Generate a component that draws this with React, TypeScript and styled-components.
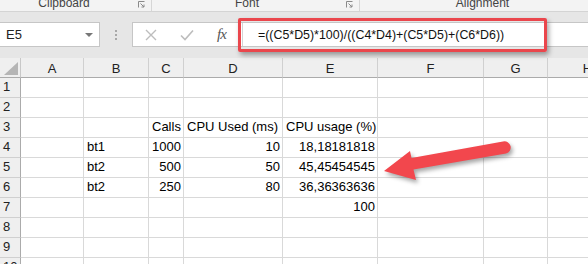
import React from 'react';
import styled, {createGlobalStyle} from 'styled-components';

type Align = 'left' | 'right';

type CellData = {
  value: string;
  align: Align;
};

const columns = [
  {key: 'A', width: 63},
  {key: 'B', width: 65},
  {key: 'C', width: 35},
  {key: 'D', width: 99},
  {key: 'E', width: 95},
  {key: 'F', width: 106},
  {key: 'G', width: 64},
  {key: 'H', width: 80},
];

const rows = [1, 2, 3, 4, 5, 6, 7, 8, 9, 10];

const cells: Record<string, CellData> = {
  C3: {value: 'Calls', align: 'left'},
  D3: {value: 'CPU Used (ms)', align: 'left'},
  E3: {value: 'CPU usage (%)', align: 'left'},
  B4: {value: 'bt1', align: 'left'},
  C4: {value: '1000', align: 'right'},
  D4: {value: '10', align: 'right'},
  E4: {value: '18,18181818', align: 'right'},
  B5: {value: 'bt2', align: 'left'},
  C5: {value: '500', align: 'right'},
  D5: {value: '50', align: 'right'},
  E5: {value: '45,45454545', align: 'right'},
  B6: {value: 'bt2', align: 'left'},
  C6: {value: '250', align: 'right'},
  D6: {value: '80', align: 'right'},
  E6: {value: '36,36363636', align: 'right'},
  E7: {value: '100', align: 'right'},
};

const groups = [
  {label: 'Clipboard', width: 152, shift: 10, launcher: true},
  {label: 'Font', width: 208, shift: 4, launcher: true},
  {label: 'Alignment', width: 250, shift: 4, launcher: false},
];

function Launcher() {
  return (
    <svg width="7" height="7" viewBox="0 0 7 7">
      <path d="M0.5 6.5V0.5H6.5" fill="none" stroke="#8a8a8a" />
      <path d="M2.5 2.5L6 6M6 3.5V6H3.5" fill="none" stroke="#8a8a8a" />
    </svg>
  );
}

function App() {
  return (
    <>
      <GlobalStyle />
      <Page>
        <Ribbon>
          {groups.map(group => (
            <Ribbon.Group key={group.label} $width={group.width}>
              <Ribbon.Label $shift={group.shift}>{group.label}</Ribbon.Label>
              {group.launcher && (
                <Ribbon.Launcher>
                  <Launcher />
                </Ribbon.Launcher>
              )}
            </Ribbon.Group>
          ))}
        </Ribbon>

        <Formula.Bar>
          <Formula.NameBox>
            E5
            <Formula.Caret />
          </Formula.NameBox>
          <Formula.Grip>
            <span />
            <span />
            <span />
          </Formula.Grip>
          <Formula.Field>
            <Formula.Buttons>
              <svg width="12" height="12" viewBox="0 0 12 12">
                <path d="M1 1L11 11M11 1L1 11" stroke="#bdbdbd" strokeWidth="1.4" />
              </svg>
              <svg width="14" height="12" viewBox="0 0 14 12">
                <path d="M1 6.5L5 10.5L13 1.5" fill="none" stroke="#bdbdbd" strokeWidth="1.6" />
              </svg>
              <Formula.Fx>fx</Formula.Fx>
            </Formula.Buttons>
            <Formula.Input>
              =((C5*D5)*100)/((C4*D4)+(C5*D5)+(C6*D6))
              <Formula.Highlight />
            </Formula.Input>
          </Formula.Field>
        </Formula.Bar>

        <Sheet.Grid $columns={columns.map(c => c.width)}>
          <Sheet.Corner>
            <Sheet.Triangle />
          </Sheet.Corner>
          {columns.map(col => (
            <Sheet.ColHead key={col.key}>{col.key}</Sheet.ColHead>
          ))}
          {rows.map(row => (
            <React.Fragment key={row}>
              <Sheet.RowHead>{row}</Sheet.RowHead>
              {columns.map(col => {
                const cell = cells[`${col.key}${row}`];
                return (
                  <Sheet.Cell key={col.key} $align={cell ? cell.align : 'left'}>
                    {cell && cell.value}
                  </Sheet.Cell>
                );
              })}
            </React.Fragment>
          ))}
        </Sheet.Grid>

        <Arrow viewBox="378 134 140 52" width="140" height="52">
          <path
            d="M384 171 L410 151 L411.5 158 L503 141.5 A6.2 6.2 0 0 1 506 153.6 L413.5 169.5 L416 180 Z"
            fill="#f2474d"
          />
        </Arrow>
      </Page>
    </>
  );
}

export default App;

const GlobalStyle = createGlobalStyle`
  html, body {
    margin: 0;
    padding: 0;
    background: #e6e6e6;
  }
  body {
    font-family: "Liberation Sans", Arial, sans-serif;
    overflow: hidden;
  }
`;

const Page = styled.div`
  position: relative;
  width: 588px;
  height: 264px;
  overflow: hidden;
  background: #e6e6e6;
`;

const RibbonBase = styled.div`
  display: flex;
  height: 11px;
  background: #f3f3f3;
  border-bottom: 1px solid #d4d4d4;
  overflow: hidden;
`;

const Ribbon = Object.assign(RibbonBase, {
  Group: styled.div<{$width: number}>`
    display: flex;
    flex: none;
    width: ${p => p.$width}px;
    box-sizing: border-box;
    border-right: 1px solid #d6d6d6;
  `,
  Label: styled.div<{$shift: number}>`
    flex: 1;
    padding-right: ${p => p.$shift}px;
    margin-top: -4px;
    text-align: center;
    font-size: 12px;
    line-height: 14px;
    color: #444;
  `,
  Launcher: styled.div`
    display: flex;
    margin: 1px 6px 0 0;
  `,
});

const Formula = {
  Bar: styled.div`
    display: flex;
    align-items: center;
    height: 46px;
    padding: 10px 0 11px;
    box-sizing: border-box;
  `,
  NameBox: styled.div`
    position: relative;
    display: flex;
    align-items: center;
    width: 100px;
    height: 25px;
    box-sizing: border-box;
    padding-left: 6px;
    background: #fff;
    border: 1px solid #c6c6c6;
    border-left: none;
    font-size: 13px;
    color: #222;
  `,
  Caret: styled.span`
    position: absolute;
    right: 6px;
    top: 10px;
    border-left: 4px solid transparent;
    border-right: 4px solid transparent;
    border-top: 4px solid #777;
  `,
  Grip: styled.div`
    display: flex;
    flex-direction: column;
    align-items: center;
    gap: 2px;
    width: 32px;

    span {
      width: 2px;
      height: 2px;
      background: #a8a8a8;
    }
  `,
  Field: styled.div`
    display: flex;
    flex: 1;
    height: 25px;
    box-sizing: border-box;
    background: #fff;
    border: 1px solid #c6c6c6;
    border-right: none;
  `,
  Buttons: styled.div`
    display: flex;
    align-items: center;
    gap: 23px;
    width: 109px;
    padding-left: 12px;
    box-sizing: border-box;
  `,
  Fx: styled.span`
    font-family: "Liberation Serif", "Times New Roman", serif;
    font-style: italic;
    font-size: 15px;
    color: #555;
    letter-spacing: -1px;
  `,
  Input: styled.div`
    position: relative;
    display: flex;
    align-items: center;
    flex: 1;
    padding-left: 15px;
    font-size: 12.4px;
    color: #111;
    border-left: 1px solid #d4d4d4;
  `,
  Highlight: styled.div`
    position: absolute;
    left: -5px;
    top: -5px;
    width: 309px;
    height: 34px;
    box-sizing: border-box;
    border: 3.5px solid #ea464c;
    border-radius: 2px;
    box-shadow: 2px 3px 5px rgba(0, 0, 0, 0.35);
  `,
};

const Sheet = {
  Grid: styled.div<{$columns: number[]}>`
    display: grid;
    grid-template-columns: 21px ${p => p.$columns.map(w => `${w}px`).join(' ')};
    grid-auto-rows: 20px;
    background: #fff;
    font-size: 13px;
    color: #000;
  `,
  Corner: styled.div`
    position: relative;
    background: #efefef;
    border-right: 1px solid #c8c8c8;
    border-bottom: 1px solid #ababab;
  `,
  Triangle: styled.span`
    position: absolute;
    right: 2px;
    bottom: 2px;
    width: 14px;
    height: 13px;
    background: #b5b5b5;
    clip-path: polygon(100% 0, 100% 100%, 0 100%);
  `,
  ColHead: styled.div`
    display: flex;
    align-items: center;
    justify-content: center;
    padding-top: 1px;
    box-sizing: border-box;
    background: #efefef;
    border-right: 1px solid #d0d0d0;
    border-bottom: 1px solid #ababab;
    color: #222;
  `,
  RowHead: styled.div`
    display: flex;
    align-items: flex-end;
    padding: 0 0 3px 3px;
    box-sizing: border-box;
    background: #efefef;
    border-right: 1px solid #ababab;
    border-bottom: 1px solid #d0d0d0;
    color: #222;
  `,
  Cell: styled.div<{$align: Align}>`
    display: flex;
    align-items: flex-end;
    justify-content: ${p => (p.$align === 'right' ? 'flex-end' : 'flex-start')};
    padding: 0 2px 3px 3px;
    box-sizing: border-box;
    border-right: 1px solid #d9d9d9;
    border-bottom: 1px solid #d9d9d9;
    white-space: nowrap;
    line-height: 14px;
  `,
};

const Arrow = styled.svg`
  position: absolute;
  left: 378px;
  top: 134px;
  overflow: visible;
  filter: drop-shadow(2px 3px 2px rgba(0, 0, 0, 0.35));
`;
